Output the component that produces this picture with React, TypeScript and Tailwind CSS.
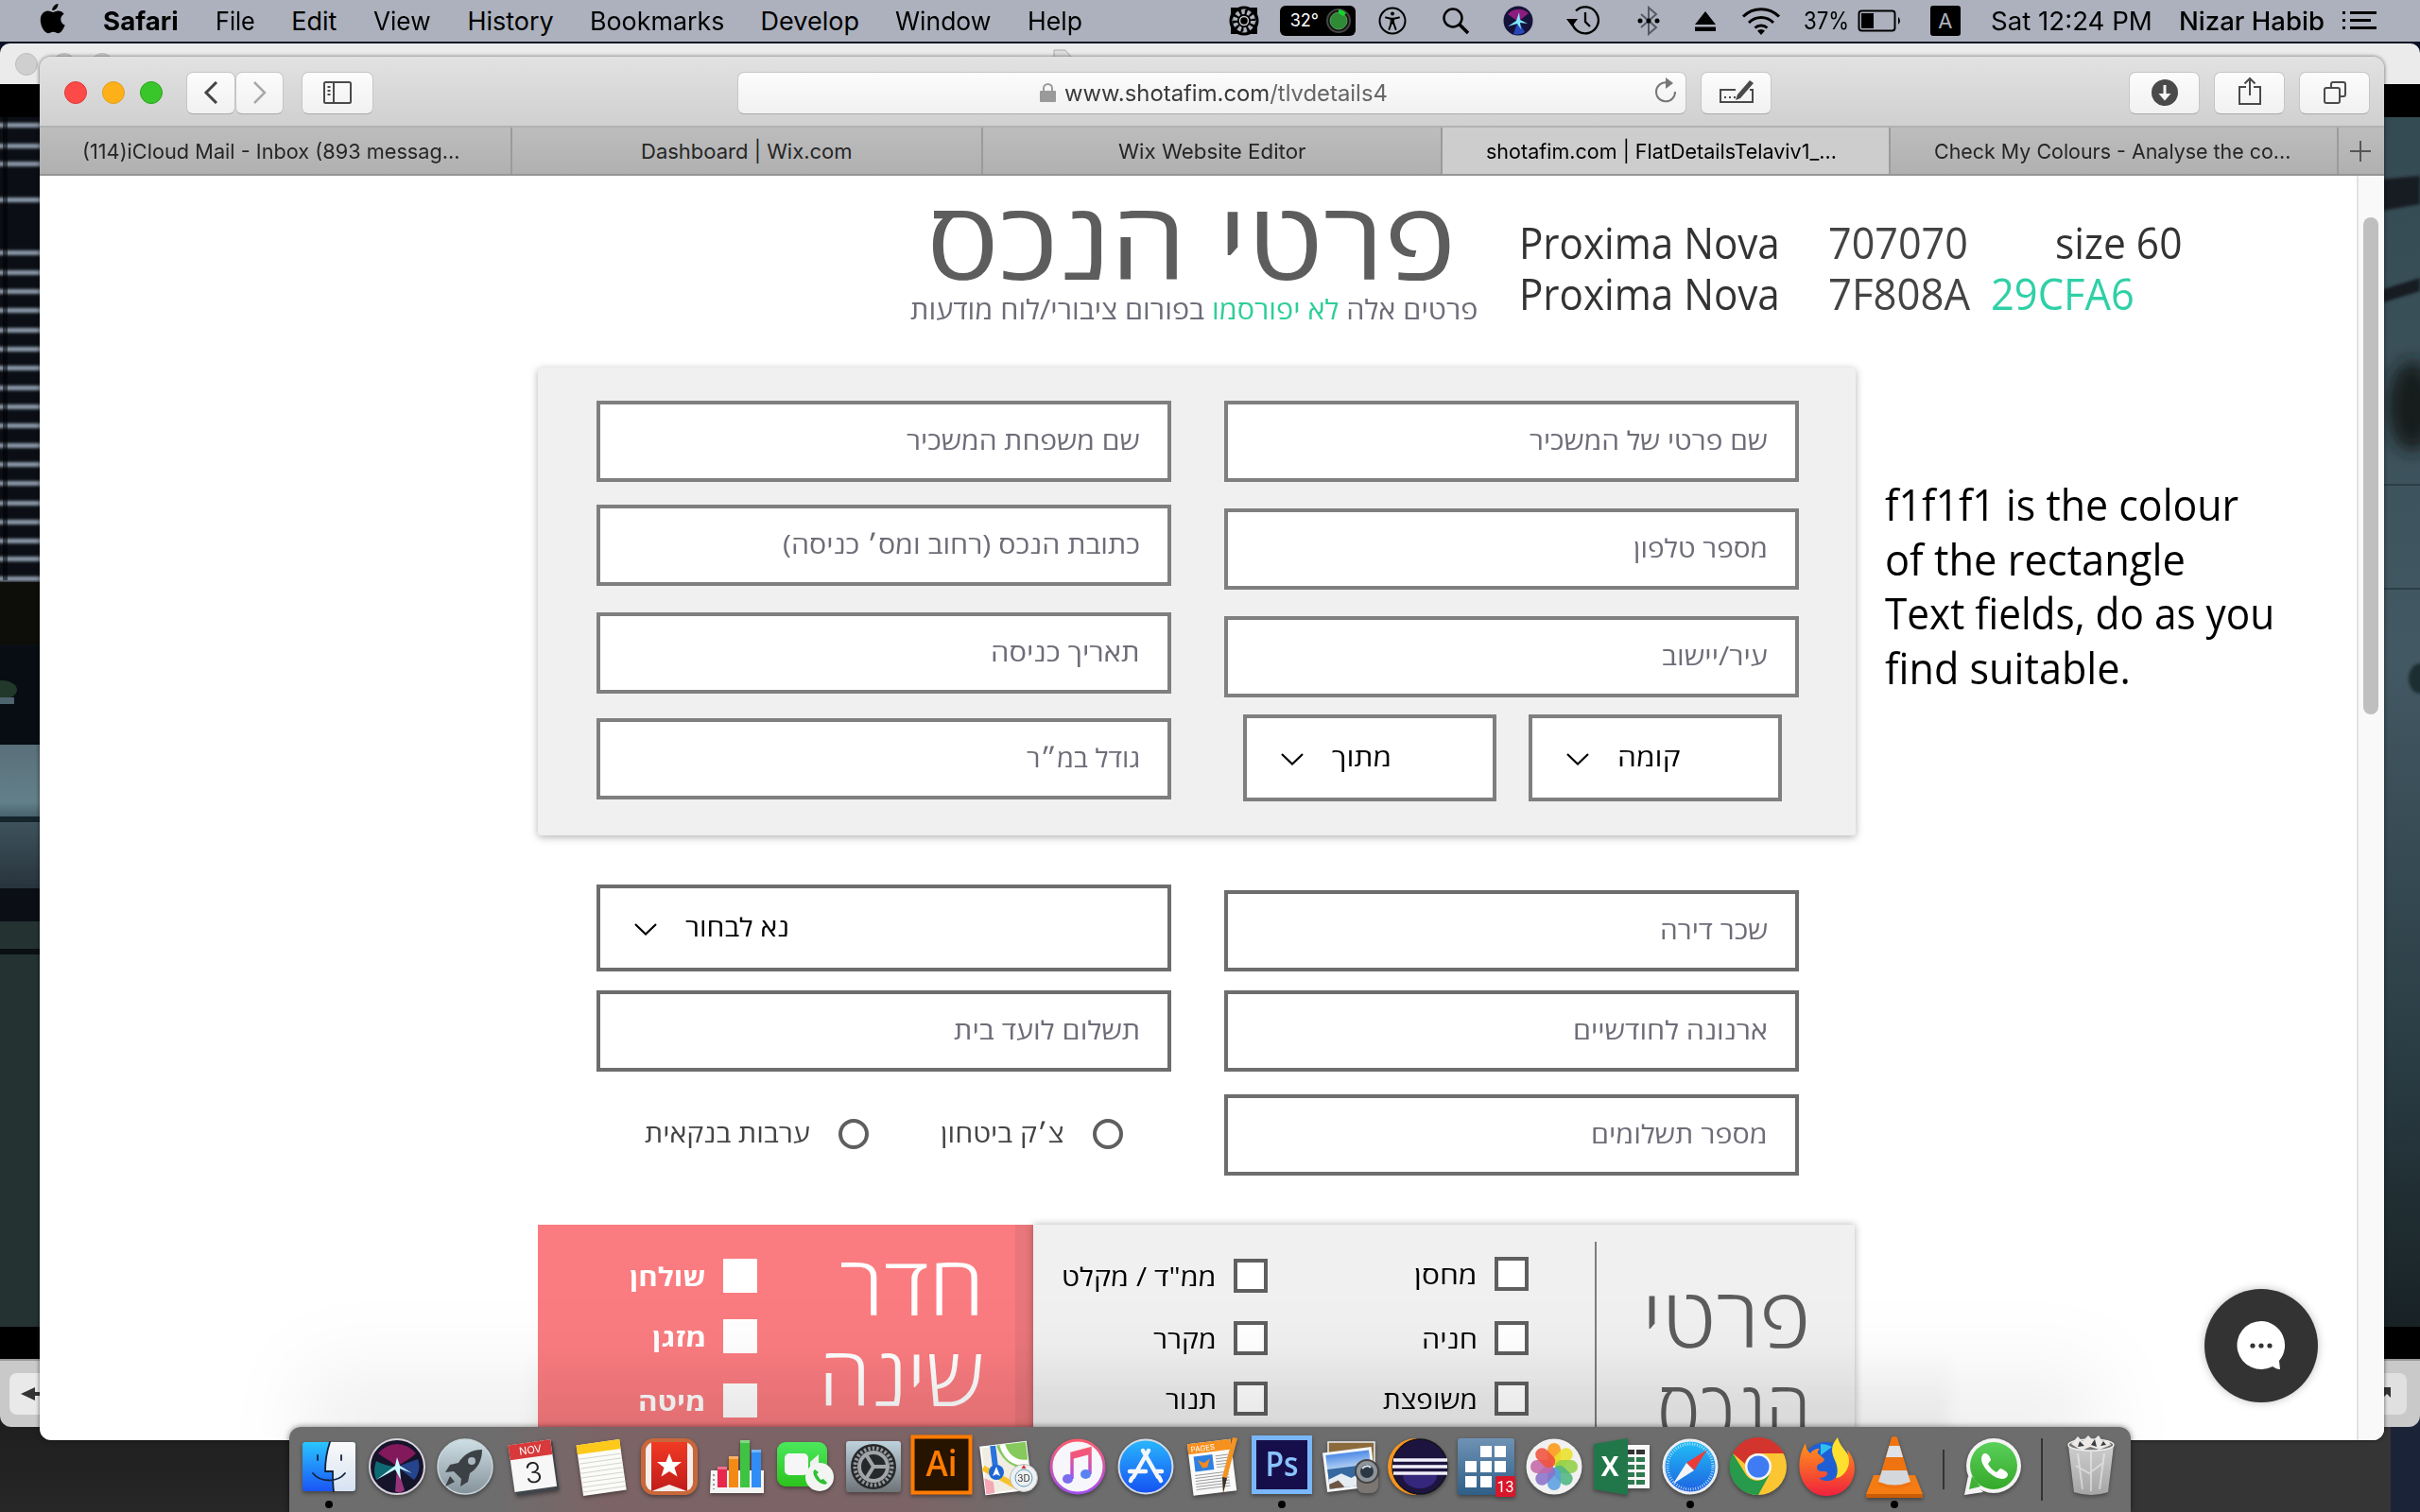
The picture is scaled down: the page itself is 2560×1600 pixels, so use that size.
import React, { useLayoutEffect, useRef, useState } from "react";

/* Text stretched or squeezed horizontally to occupy an exact width. */
function Fit({ w, children, className = "", rtl = false }: { w: number; children: React.ReactNode; className?: string; rtl?: boolean }) {
  const ref = useRef<HTMLSpanElement>(null);
  const [scale, setScale] = useState(1);
  useLayoutEffect(() => {
    if (ref.current && ref.current.offsetWidth) setScale(w / ref.current.offsetWidth);
  }, [w]);
  return (
    <span dir="ltr" className={`flex shrink-0 justify-start ${className}`} style={{ width: w }}>
      <span ref={ref} dir={rtl ? "rtl" : "ltr"} className="block shrink-0 origin-left whitespace-nowrap" style={{ transform: `scaleX(${scale})` }}>
        {children}
      </span>
    </span>
  );
}

/* ---------- Menu bar ---------- */
const menus: [string, number][] = [
  ["File", 42], ["Edit", 48], ["View", 61], ["History", 91], ["Bookmarks", 142], ["Develop", 104], ["Window", 101], ["Help", 58],
];

function MenuBar() {
  return (
    <div className="relative z-10 flex h-11 items-center bg-[#adb1bd] font-['Inter'] text-[27px] leading-none text-black">
      <svg className="ml-[42px] h-8 w-7 -translate-y-0.5" viewBox="0 0 28 32">
        <path d="M19.5 0c.2 3.600-2.800 7.200-6.200 7.100C13 3.600 16 .4 19.500 0zM13.900 8.900c1.300 0 3.200-1.500 5.800-1.500 2.300 0 4.600 1.200 6 3.300-5 2.900-4.300 9.900 1 11.900-1 3-3.900 8.500-6.900 8.600-2.100 0-2.900-1.400-5.400-1.400s-3.400 1.400-5.400 1.400C5 31.200.8 23.600.8 17.300c0-6.200 3.900-9.700 7.700-9.700 2.300 0 4.200 1.300 5.400 1.300z" />
      </svg>
      <Fit w={80} className="ml-[39px] font-bold">Safari</Fit>
      {menus.map(([m, w]) => <Fit key={m} w={w} className="ml-[38.600px]">{m}</Fit>)}
      <svg className="ml-[155px] h-8 w-8" viewBox="0 0 32 32" fill="none" stroke="#000">
        <path d="M2 2h6l8 3 8-3h6v6l-2 8 2 8v6h-6l-8-3-8 3H2v-6l2-8-2-8z" fill="#000" stroke="none" />
        <circle cx="16" cy="16" r="14" strokeWidth="3" />
        <circle cx="16" cy="16" r="9.500" stroke="#adb1bd" strokeWidth="5" strokeDasharray="3.500 2.470" />
        <circle cx="16" cy="16" r="4.500" fill="#000" stroke="#ccc" strokeWidth="1.500" />
      </svg>
      <div className="ml-[22px] flex h-8 w-20 items-center justify-between rounded-md bg-black pl-[11px] pr-1 text-[18px] text-white">
        <span>32°</span>
        <svg className="h-7 w-7" viewBox="0 0 28 28"><circle cx="14" cy="14" r="12" fill="#111" stroke="#444" strokeWidth="2" /><circle cx="14" cy="14" r="9" fill="#2f8a35" stroke="#5b9c5f" /><path d="M14 2a12 12 0 0 1 8 4l-3 3-5-3z" fill="#19d52b" /></svg>
      </div>
      <svg className="ml-6 h-[30px] w-[30px]" viewBox="0 0 30 30" fill="none" stroke="#000" strokeWidth="2" strokeLinecap="round"><circle cx="15" cy="15" r="13.500" /><circle cx="15" cy="7.500" r="2" fill="#000" stroke="none" /><path d="M8 11.500l5.500 1.200h3L22 11.500" /><path d="M13.500 12.500h3v5.500h-3z" fill="#000" strokeWidth="1" /><path d="M13.700 17.500L11.500 24M16.300 17.500l2.200 6.500" /></svg>
      <svg className="ml-[37px] h-[30px] w-[30px]" viewBox="0 0 30 30" fill="none" stroke="#000" strokeWidth="2.500"><circle cx="12" cy="12" r="9.500" /><path d="M19 19l9 9" strokeWidth="3.500" /></svg>
      <svg className="ml-9 h-8 w-8 -translate-x-px" viewBox="0 0 32 32"><circle cx="16" cy="16" r="15.500" fill="#15133a" /><path d="M5 9a15 15 0 0 1 22-1L16 17z" fill="#8c1d7e" /><path d="M16 16l7 12a15 15 0 0 1-12 2z" fill="#2c55d8" opacity=".8" /><path d="M5 22l9-6 3-9 1 8 8 4-8-1 1 7-4-6z" fill="#7fe9ff" /></svg>
      <svg className="ml-[32px] h-8 w-[38px]" viewBox="0 0 38 32" fill="none" stroke="#000" strokeWidth="2.300"><path d="M8 17a14 14 0 1 0 4-11.500M22 7v10l5 5" /><path d="M2 14h12l-6 8z" fill="#000" stroke="none" /></svg>
      <svg className="ml-[39px] h-8 w-6" viewBox="0 0 24 32" fill="none" stroke="#555a66" strokeWidth="2"><path d="M4 9l16 14-8 7V2l8 7L4 23" /><g fill="#000" stroke="none"><circle cx="3" cy="16" r="2.500" /><circle cx="12" cy="16" r="2.500" /><circle cx="21" cy="16" r="2.500" /></g></svg>
      <svg className="ml-[36px] h-6 w-6" viewBox="0 0 24 24"><path d="M12 2l11 14H1zM1 18.500h22V23H1z" /></svg>
      <svg className="ml-[26px] h-[30px] w-[42px]" viewBox="0 0 42 30" fill="none" stroke="#000" strokeWidth="3"><path d="M2 10.500a27 27 0 0 1 38 0M8 17a18 18 0 0 1 26 0M14.500 22.500a9.500 9.500 0 0 1 13 0" /><path d="M21 30l-4-4.500a6 6 0 0 1 8 0z" fill="#000" stroke="none" /></svg>
      <Fit w={48} className="ml-[24px] text-[25px]">37%</Fit>
      <svg className="ml-[9px] h-6 w-12" viewBox="0 0 48 24"><rect x="1.500" y="1.500" width="38" height="21" rx="3" fill="none" stroke="#000" strokeWidth="2" /><rect x="4" y="4" width="13" height="16" /><path d="M43 8a5 5 0 0 1 0 8z" /></svg>
      <span className="ml-[29px] flex h-8 w-8 items-center justify-center rounded-[3px] bg-black text-[22px] text-[#adb1bd]">A</span>
      <Fit w={171} className="ml-8">Sat 12:24 PM</Fit>
      <Fit w={154} className="ml-7 font-medium">Nizar Habib</Fit>
      <svg className="ml-[19px] h-5 w-9" viewBox="0 0 36 20"><path d="M0 0h3v3H0zM8 0h28v3H8zM0 8h3v3H0zM8 8h22v3H8zM0 16h3v3H0zM8 16h28v3H8z" /></svg>
    </div>
  );
}

/* ---------- Background photo window ---------- */
const blinds = [131, 153, 172, 210, 266, 287, 307, 327, 348, 368, 388, 409, 429, 449, 470, 490, 510, 531, 551, 571, 590, 611];

function Backdrop() {
  return (
    <>
      <svg className="absolute inset-0 h-[1600px] w-[2560px]" viewBox="0 0 2560 1600">
        <defs>
          <filter id="soft" x="-50%" y="-50%" width="200%" height="200%"><feGaussianBlur stdDeviation="1.600" /></filter>
          <filter id="softer" x="-50%" y="-50%" width="200%" height="200%"><feGaussianBlur stdDeviation="9" /></filter>
          <linearGradient id="counter" x1="0" y1="0" x2="0" y2="1"><stop offset="0" stopColor="#5a6f79" /><stop offset=".4" stopColor="#62808a" /><stop offset=".55" stopColor="#3d525b" /><stop offset="1" stopColor="#28333d" /></linearGradient>
          <linearGradient id="wall" x1="0" y1="0" x2="0" y2="1"><stop offset="0" stopColor="#344a52" /><stop offset=".45" stopColor="#425862" /><stop offset=".75" stopColor="#2c3f47" /><stop offset="1" stopColor="#182225" /></linearGradient>
          <linearGradient id="desk" x1="0" y1="0" x2="0" y2="1"><stop offset="0" stopColor="#1c1c1c" /><stop offset="1" stopColor="#272727" /></linearGradient>
        </defs>
        <rect width="2560" height="1600" fill="#0a1124" />
        <rect y="1480" width="1280" height="120" fill="url(#desk)" />
        <rect x="1280" y="1480" width="1249" height="120" fill="#353535" />
        <rect x="2529" y="1480" width="31" height="120" fill="#1b2338" />
        <rect y="80" width="2560" height="1400" fill="#000" />
        <rect y="124" width="50" height="1280" fill="#0b0f15" />
        {blinds.map((y) => <rect key={y} x="-6" y={y - 1} width="56" height="5" fill="#8b99a9" filter="url(#soft)" />)}
        <rect x="3" y="124" width="5" height="490" fill="#000" opacity=".55" />
        <rect y="616" width="50" height="66" fill="#0d0d09" />
        <rect y="684" width="50" height="104" fill="#070d12" />
        <ellipse cx="2" cy="730" rx="16" ry="10" fill="#21382a" />
        <rect y="738" width="15" height="7" fill="#4d646e" />
        <rect y="788" width="50" height="152" fill="url(#counter)" />
        <rect y="864" width="50" height="6" fill="#15252c" />
        <rect y="975" width="50" height="429" fill="#243231" />
        <rect y="1004" width="50" height="6" fill="#0a0f0f" />
        <rect x="2510" y="124" width="50" height="1280" fill="url(#wall)" />
        <path d="M2515 190l45-4v30l-45 8zM2515 308l45-14v14l-45 14z" fill="#131d20" filter="url(#soft)" />
        <ellipse cx="2552" cy="430" rx="26" ry="48" fill="#131c1c" filter="url(#softer)" />
        <ellipse cx="2560" cy="718" rx="12" ry="16" fill="#1c2d33" filter="url(#soft)" />
        <path d="M2515 512h45v2h-45zM2515 622h45v2h-45z" fill="#2c3f48" />
      </svg>
      <div className="absolute left-0 top-[46px] h-[43px] w-full overflow-hidden rounded-t-[10px] bg-[#ebebeb]">
        <div className="flex h-11 items-center gap-4 pl-4">
          <span className="size-6 rounded-full border border-[#bdbdbd] bg-[#cfcfcf]" />
          <span className="size-6 rounded-full border border-[#bdbdbd] bg-[#cfcfcf]" />
          <span className="size-6 rounded-full border border-[#bdbdbd] bg-[#cfcfcf]" />
          <svg className="ml-[978px] h-8 w-5" viewBox="0 0 20 32"><path d="M1 1h12l6 7v23H1z" fill="#ddd" stroke="#aaa" /></svg>
        </div>
      </div>
      <div className="absolute left-0 top-[1438px] flex h-[72px] w-full items-center justify-between rounded-b-[12px] border-t-2 border-[#999] bg-[#c9c9c9] px-[10px]">
        <span className="flex h-11 w-[60px] items-center rounded-lg bg-[#e9e9e9] pl-3"><svg className="h-4 w-9" viewBox="0 0 36 16"><path d="M0 8l15-7v5h20v4H15v5z" fill="#333" /></svg></span>
        <span className="mr-1 flex h-11 w-[60px] items-center justify-end rounded-lg bg-[#e0e0e0] pr-4"><svg className="size-4" viewBox="0 0 16 16"><path d="M4 1h11v11l-4-4-8 8-3-3 8-8z" fill="#333" /></svg></span>
      </div>
    </>
  );
}

/* ---------- Safari chrome ---------- */
const btn = "flex h-[45px] items-center justify-center rounded-[7px] border border-[#c6c6c6] border-b-[#a9a9a9] bg-gradient-to-b from-[#fcfcfc] to-[#f1f1f1]";

function Toolbar() {
  return (
    <div className="flex h-[75px] items-center border-b-2 border-[#b2b2b2] bg-gradient-to-b from-[#e2e2e2] to-[#d0d0d0] pt-[3px]">
      <span className="ml-[26px] size-6 rounded-full border border-[#e0383a] bg-[#fc4a48]" />
      <span className="ml-4 size-6 rounded-full border border-[#dfa023] bg-[#fdb017]" />
      <span className="ml-4 size-6 rounded-full border border-[#2aa31c] bg-[#39c62a]" />
      <span className={`${btn} ml-[25px] w-[52px]`}><svg className="h-6 w-4" viewBox="0 0 16 24" fill="none" stroke="#444" strokeWidth="3"><path d="M14 1L3 12l11 11" /></svg></span>
      <span className={`${btn} w-[51px]`}><svg className="h-6 w-4" viewBox="0 0 16 24" fill="none" stroke="#a9a9a9" strokeWidth="2.500"><path d="M2 1l11 11L2 23" /></svg></span>
      <span className={`${btn} ml-[19px] w-[76px]`}><svg className="h-6 w-[30px]" viewBox="0 0 30 24" fill="none" stroke="#4a4a4a" strokeWidth="2"><rect x="1" y="1" width="28" height="22" rx="1.500" /><path d="M11 1v22M4.500 6h3M4.500 10h3M4.500 14h3" /></svg></span>
      <div className={`${btn} ml-[385px] w-[1004px] font-['Inter'] text-[24px] leading-none`}>
        <span className="flex w-[966px] items-center justify-center">
          <svg className="ml-[20px] mr-2 h-5 w-[18px] shrink-0" viewBox="0 0 18 20"><rect y="8" width="17" height="12" rx="1" fill="#9a9a9a" /><path d="M4 9V5.500a4.500 4.500 0 0 1 9 0V9" fill="none" stroke="#9a9a9a" strokeWidth="2" /></svg>
          <Fit w={342} className="translate-y-px text-[#3a3a3a]">www.shotafim.com<span className="text-[#666]">/tlvdetails4</span></Fit>
        </span>
        <svg className="-ml-[7px] h-7 w-6 -translate-y-0.5" viewBox="0 0 24 28" fill="none" stroke="#777" strokeWidth="2"><path d="M14 5.500A10 10 0 1 0 22 15" /><path d="M12 0l8 6-8 6z" fill="#777" stroke="none" /></svg>
      </div>
      <span className={`${btn} ml-[15px] w-[75px]`}><svg className="h-7 w-10" viewBox="0 0 40 28" fill="none" stroke="#4a4a4a" strokeWidth="2"><path d="M19 11H3v13h34V11h-3" /><path d="M7 19h2M12 19h2M17 19h2" /><path d="M34 1l4 3-14 16-5 2 2-6z" fill="#4a4a4a" stroke="none" /></svg></span>
      <span className={`${btn} ml-[378px] w-[75px]`}><svg className="size-7" viewBox="0 0 28 28"><circle cx="14" cy="14" r="14" fill="#4a4a4a" /><path d="M12.500 6h3v9h5L14 22.500 7.500 15h5z" fill="#f5f5f5" /></svg></span>
      <span className={`${btn} ml-[15px] w-[75px]`}><svg className="h-8 w-6 -translate-y-0.5" viewBox="0 0 24 32" fill="none" stroke="#4a4a4a" strokeWidth="2"><path d="M8 12H1v18h22V12h-7M12 21V3M6.500 8.500L12 3l5.500 5.500" /></svg></span>
      <span className={`${btn} ml-[15px] w-[75px]`}><svg className="size-6" viewBox="0 0 24 24" fill="none" stroke="#4a4a4a" strokeWidth="2"><rect x="1" y="7" width="16" height="16" rx="2" /><path d="M8 7V3a2 2 0 0 1 2-2h11a2 2 0 0 1 2 2v11a2 2 0 0 1-2 2h-4" /></svg></span>
    </div>
  );
}

function Tabs() {
  const tab = "flex h-full items-center justify-center border-r-2 border-[#9b9b9b]";
  return (
    <div className="flex h-[51px] items-center border-b-2 border-[#959595] bg-gradient-to-b from-[#bdbdbd] to-[#b0b0b0] font-['Inter'] text-[22px] leading-none text-[#262626]">
      <div className={`${tab} w-[500px] pr-2`}><Fit w={400}>(114)iCloud Mail - Inbox (893 messag...</Fit></div>
      <div className={`${tab} w-[498px]`}><Fit w={224}>Dashboard | Wix.com</Fit></div>
      <div className={`${tab} w-[486px]`}><Fit w={198}>Wix Website Editor</Fit></div>
      <div className={`${tab} w-[474px] bg-[#cdcdcd] pr-2.5 text-black`}><Fit w={371}>shotafim.com | FlatDetailsTelaviv1_...</Fit></div>
      <div className={`${tab} w-[474px] pr-[3px]`}><Fit w={377}>Check My Colours - Analyse the co...</Fit></div>
      <svg className="ml-[11px] size-6" viewBox="0 0 24 24" stroke="#555" strokeWidth="2"><path d="M12 1v22M1 12h22" /></svg>
    </div>
  );
}

/* ---------- Page ---------- */
const heb = "font-['Open_Sans','Liberation_Sans',sans-serif]";

function Field({ label, w, dark = false, className = "" }: { label: string; w: number; dark?: boolean; className?: string }) {
  return (
    <div className={`flex h-[86px] w-[608px] items-center justify-end border-4 bg-white pb-[3px] pr-[29px] text-[27px] font-medium leading-none text-[#6d6d78] ${dark ? "border-[#6d6d6d]" : "border-[#7f7f7f]"} ${className}`}>
      <Fit w={w} rtl>{label}</Fit>
    </div>
  );
}

function Select({ label, w, className = "" }: { label: string; w: number; className?: string }) {
  return (
    <div className={`flex h-[92px] items-center border-4 bg-white pb-[3px] pl-[36px] text-[27px] font-medium leading-none text-black ${className}`}>
      <svg className="mr-[30px] h-[13px] w-6 translate-y-[3px]" viewBox="0 0 24 13" fill="none" stroke="#000" strokeWidth="2.200"><path d="M1 1l11 10.500L23 1" /></svg>
      <Fit w={w} rtl>{label}</Fit>
    </div>
  );
}

function Check({ label, w, className = "", box = "border-4 border-[#5f5f5f] bg-white" }: { label: string; w: number; className?: string; box?: string }) {
  return (
    <div className={`flex items-center justify-end gap-[18px] ${className}`}>
      <Fit w={w} rtl>{label}</Fit>
      <span className={`size-9 shrink-0 ${box}`} />
    </div>
  );
}

function Radio({ label, w, className = "" }: { label: string; w: number; className?: string }) {
  return (
    <div className={`flex items-center gap-[30px] ${className}`}>
      <Fit w={w} rtl className="-translate-y-0.5">{label}</Fit>
      <span className="size-8 rounded-full border-4 border-[#5f5f5f]" />
    </div>
  );
}

function Page() {
  return (
    <div className={`relative flex h-[1338px] bg-white ${heb}`}>
      <main className="h-full w-[2451px] overflow-hidden">
        <header className="flex h-[203px]">
          <div className="ml-[921px] w-[598px]">
            <h1 className="ml-[17px] mt-[11px] h-[110px] text-[114px] font-medium leading-[110px] text-[#5d5d5d]"><Fit w={560} rtl>פרטי הנכס</Fit></h1>
            <p className="mt-[2px] text-[28.500px] font-medium leading-[36px] text-[#6d6d78]">
              <Fit w={600} rtl>פרטים אלה <span className="text-[#2fce98]">לא יפורסמו</span> בפורום ציבורי/לוח מודעות</Fit>
            </p>
          </div>
          <div className="ml-[46px] mt-[43px] text-[46px] leading-[54px] text-[#333]">
            <div className="flex"><Fit w={276}>Proxima Nova</Fit><Fit w={148} className="ml-[51px] text-[#444]">707070</Fit><Fit w={134} className="ml-[92px]">size 60</Fit></div>
            <div className="flex"><Fit w={276}>Proxima Nova</Fit><Fit w={150} className="ml-[51px] text-[#444]">7F808A</Fit><Fit w={152} className="ml-[22px] text-[#2fd0a6]">29CFA6</Fit></div>
          </div>
        </header>

        <div className="flex">
          <section className="ml-[527px] flex h-[495px] w-[1394px] rounded-[3px] bg-[#f0f0f0] pl-[62px] pt-[35px] shadow-[0_2px_8px_rgba(0,0,0,0.3)]">
            <div>
              <Field label="שם משפחת המשכיר" w={247} />
              <Field label="כתובת הנכס (רחוב ומס׳ כניסה)" w={378} className="mt-6" />
              <Field label="תאריך כניסה" w={158} className="mt-7" />
              <Field label="גודל במ״ר" w={120} className="mt-[26px]" />
            </div>
            <div className="ml-14">
              <Field label="שם פרטי של המשכיר" w={252} />
              <Field label="מספר טלפון" w={142} className="mt-7" />
              <Field label="עיר/יישוב" w={112} className="mt-7" />
              <div className="ml-5 mt-[18px] flex gap-[34px]">
                <Select label="מתוך" w={63} className="w-[268px] border-[#7f7f7f]" />
                <Select label="קומה" w={67} className="w-[268px] border-[#7f7f7f]" />
              </div>
            </div>
          </section>
          <aside className="ml-[31px] mt-[116px] text-[46px] leading-[57.700px] text-black">
            <Fit w={374}>f1f1f1 is the colour</Fit>
            <Fit w={318}>of the rectangle</Fit>
            <Fit w={412}>Text fields, do as you</Fit>
            <Fit w={260}>find suitable.</Fit>
          </aside>
        </div>

        <section className="ml-[589px] mt-[52px] flex h-[308px] gap-14">
          <div>
            <Select label="נא לבחור" w={110} className="w-[608px] border-[#6d6d6d]" />
            <Field label="תשלום לועד בית" w={197} dark className="mt-5" />
            <div className="ml-[51px] mt-[50px] flex items-center text-[27px] font-medium leading-none text-[#444]">
              <Radio label="ערבות בנקאית" w={175} />
              <Radio label="צ׳ק ביטחון" w={131} className="ml-[76px]" />
            </div>
          </div>
          <div className="pt-1.5">
            <Field label="שכר דירה" w={114} dark />
            <Field label="ארנונה לחודשיים" w={206} dark className="mt-5" />
            <Field label="מספר תשלומים" w={187} dark className="mt-6" />
          </div>
        </section>

        <section className="ml-[527px] mt-[52px] flex h-[240px] w-[1393px] text-[27px] font-medium leading-none">
          <div className="flex w-[524px] border-r-[19px] border-[#e9767a] bg-[#fa7c80] text-white">
            <div className="w-[232px] pt-9 font-bold">
              <Check label="שולחן" w={81} box="bg-white" />
              <Check label="מזגן" w={57} box="bg-white" className="mt-7" />
              <Check label="מיטה" w={72} box="bg-white" className="mt-8" />
            </div>
            <div className="flex w-[240px] flex-col items-end pt-[14px] text-[87px] font-light leading-[96px]">
              <Fit w={153} rtl>חדר</Fit>
              <Fit w={175} rtl>שינה</Fit>
            </div>
          </div>
          <div className="flex h-full w-[869px] bg-[#f0f0f0] text-black shadow-[0_0_8px_rgba(0,0,0,0.3)]">
            <div className="w-[248px] pt-9">
              <Check label={'ממ"ד / מקלט'} w={164} />
              <Check label="מקרר" w={67} className="mt-[30px]" />
              <Check label="תנור" w={54} className="mt-7" />
            </div>
            <div className="w-[276px] pt-[34px]">
              <Check label="מחסן" w={67} />
              <Check label="חניה" w={59} className="mt-8" />
              <Check label="משופצת" w={100} className="mt-7" />
            </div>
            <div className="ml-[70px] mt-[18px] w-0.5 bg-[#7d7d7d]" />
            <div className="flex flex-1 flex-col items-end pr-[47px] pt-[47px] text-[87px] font-light leading-[98px] text-[#5d5d5d]">
              <Fit w={178} rtl>פרטי</Fit>
              <Fit w={162} rtl>הנכס</Fit>
            </div>
          </div>
        </section>
      </main>
      <div className="h-full w-[29px] border-l-2 border-[#e2e2e2] bg-[#f9f9f9] pl-[5px] pt-11">
        <div className="h-[526px] w-4 rounded-full bg-[#bfbfbf]" />
      </div>
      <div className="absolute -bottom-4 left-[280px] h-[120px] w-[1900px] bg-gradient-to-b from-transparent to-black/10 blur-2xl" />
      <div className="absolute left-[520px] bottom-0 h-[100px] w-[1500px] bg-gradient-to-b from-transparent to-black/5 blur-sm" />
      <div className="absolute left-[2290px] top-[1178px] flex size-[120px] items-center justify-center rounded-full bg-[#333] shadow-[0_0_10px_rgba(0,0,0,0.25)]">
        <svg className="size-[54px]" viewBox="0 0 54 54"><path d="M27 1a25.500 25.500 0 1 0 12 48c3 2 5 3 8 3l-1-9A25.500 25.500 0 0 0 27 1z" fill="#fff" /><g fill="#333"><circle cx="18" cy="27" r="2.600" /><circle cx="27" cy="27" r="2.600" /><circle cx="36" cy="27" r="2.600" /></g></svg>
      </div>
    </div>
  );
}

/* ---------- Dock ---------- */
function DockDefs() {
  const g = (id: string, a: string, b: string) => (
    <linearGradient id={id} x1="0" y1="0" x2="0" y2="1"><stop offset="0" stopColor={a} /><stop offset="1" stopColor={b} /></linearGradient>
  );
  return (
    <svg className="absolute size-0"><defs>
      {g("gBlue", "#2ac5ff", "#1a55f5")}{g("gWhite", "#fafafa", "#d6e2f2")}{g("gRocket", "#cfdfe6", "#85929a")}{g("gGreen", "#4be85c", "#2bc31d")}
      {g("gSys", "#bfd3dd", "#6e7478")}{g("gApp", "#29b7fd", "#1550f2")}{g("gMusic", "#fb5b6e", "#a34ff0")}{g("gWa", "#5bd05a", "#34a829")}
      {g("gTile", "#6e92b4", "#2f5f87")}{g("gSaf", "#22c1f7", "#1d60e0")}{g("gFox", "#ff9a1a", "#f0213e")}{g("gSky", "#4d8be8", "#cfe2f4")}{g("gRed", "#f03a24", "#c11c1a")}{g("gTrash", "#e6e6e6", "#b5b5b5")}
    </defs></svg>
  );
}

const petals: [string, number][] = [["#fc9a14", 0], ["#e8e02a", 45], ["#93cf47", 90], ["#4fb580", 135], ["#5a9fe0", 180], ["#8a72c9", 225], ["#c469a8", 270], ["#f0523c", 315]];

const icons: [string, React.ReactNode][] = [
  ["Finder", <>
    <rect x="8" y="10" width="56" height="52" rx="3" fill="url(#gBlue)" /><path d="M37 10h24a3 3 0 0 1 3 3v46a3 3 0 0 1-3 3H41c-1-7-1-14-1-21h-8c0-12 2-22 5-31z" fill="url(#gWhite)" />
    <path d="M24 24v5M49 24v5M19 43c8 10 26 10 34 0M37 10c-3 9-5 19-5 31h8c0 7 0 14 1 21" fill="none" stroke="#10233f" strokeWidth="1.800" strokeLinecap="round" /></>],
  ["Siri", <>
    <circle cx="36" cy="36" r="29" fill="#16142b" stroke="#d9d3dc" strokeWidth="2" /><path d="M16 22a25 25 0 0 1 40 0c-6 6-12 8-20 14-6-6-12-8-20-14z" fill="#9c1a68" opacity=".8" />
    <path d="M36 36L14 50c-3-8-2-14 0-20 8 4 16 6 22 6z" fill="#0d8f94" opacity=".7" /><path d="M36 36l22-8c3 8 1 16-4 22z" fill="#2950a4" opacity=".8" />
    <path d="M36 36l8 25c-4 3-8 3-10 1z" fill="#d0439b" opacity=".7" />
    <path d="M14 50l20-15 2-9 3 9 13 8-13-5 1 12-6-11z" fill="#c9fbff" /></>],
  ["Launchpad", <>
    <circle cx="36" cy="36" r="29" fill="url(#gRocket)" stroke="#c8d6dc" strokeWidth="1.500" /><path d="M54 18c-12 0-20 6-25 14l-9 2-5 8 9-1 8 8-1 8 8-5 2-9c8-5 13-13 13-25zM20 46l-5 11 10-5z" fill="#3c4145" /><circle cx="43" cy="30" r="4" fill="#a9b8bf" /></>],
  ["Calendar", <g transform="rotate(-8 36 36)">
    <path d="M15 12h45v52H15z" fill="#3f454a" /><rect x="13" y="10" width="45" height="50" fill="#f7f7f7" /><rect x="13" y="10" width="45" height="16" fill="#d8393a" />
    <text x="35.500" y="22" textAnchor="middle" fontSize="11" fill="#fff" fontFamily="Inter">NOV</text><text x="35.500" y="53" textAnchor="middle" fontSize="30" fontWeight="300" fill="#222" fontFamily="Inter">3</text></g>],
  ["Notes", <g transform="rotate(-8 36 36)">
    <rect x="13" y="10" width="46" height="54" fill="#fbfbf8" /><rect x="13" y="10" width="46" height="10" fill="#fdc91a" />
    {[25, 30, 35, 40, 45, 50, 55, 60].map((y) => <path key={y} d={`M13 ${y}h46`} stroke="#d3d3cf" />)}</g>],
  ["Wunderlist", <>
    <rect x="6" y="6" width="60" height="60" rx="14" fill="#c9673b" /><rect x="11" y="10" width="50" height="52" rx="9" fill="#f5efec" /><path d="M17 10h38v52l-19-7-19 7z" fill="url(#gRed)" />
    <path d="M36 22l3.500 9h9.500l-7.500 6 3 9.500-8.500-5.500-8.500 5.500 3-9.500-7.500-6h9.500z" fill="#fff" /></>],
  ["Numbers", <>
    <path d="M8 40h56v24H7z" fill="#f4f4f4" /><rect x="15" y="36" width="10" height="22" fill="#e8274d" /><rect x="27" y="25" width="10" height="33" fill="#f38a16" /><rect x="39" y="8" width="10" height="50" fill="#3fc343" /><rect x="51" y="18" width="10" height="40" fill="#2f8df5" />
    <path d="M15 36h10v3H15zM27 25h10v3H27zM39 8h10v3H39zM51 18h10v3H51z" fill="#fff" opacity=".35" /><path d="M11 44v16" stroke="#999" strokeWidth="2" strokeDasharray="2 3" /></>],
  ["FaceTime", <>
    <rect x="6" y="10" width="53" height="47" rx="9" fill="url(#gGreen)" /><rect x="14" y="22" width="25" height="23" rx="5" fill="#f6f6f6" /><path d="M41 31l9-8v20l-9-7z" fill="#f0f0f0" />
    <circle cx="51" cy="47" r="15" fill="#f3f5f3" /><path d="M46 39c-4 2 0 10 4 13s8 4 9 1l-4-4-3 1-4-6 2-2z" fill="#2fc032" /></>],
  ["System Preferences", <>
    <rect x="7" y="9" width="58" height="54" rx="3" fill="url(#gSys)" /><circle cx="36" cy="36" r="24" fill="#26292b" /><circle cx="36" cy="36" r="19.500" fill="none" stroke="#96999b" strokeWidth="4" strokeDasharray="2.500 2" />
    <circle cx="36" cy="36" r="15" fill="none" stroke="#a2a5a7" strokeWidth="4" /><path d="M36 36h15M36 36l-8-13M36 36l-8 13" stroke="#a2a5a7" strokeWidth="4" /></>],
  ["Illustrator", <><rect x="5.500" y="4.500" width="61" height="59" fill="#261300" stroke="#ff7c00" strokeWidth="4" /><text x="36" y="46" textAnchor="middle" fontSize="38" fontWeight="600" fill="#ff7c00" fontFamily="Open Sans" textLength="33" lengthAdjust="spacingAndGlyphs">Ai</text></>],
  ["Maps", <>
    <g transform="rotate(-7 36 36)"><rect x="8" y="12" width="48" height="50" fill="#f1ede2" stroke="#fff" strokeWidth="2" /><path d="M25 12h31v28C40 40 28 28 25 12z" fill="#86c95c" /><path d="M31 12c3 15 12 22 25 22" fill="none" stroke="#fff" strokeWidth="6" /><path d="M8 34l36 26" stroke="#f8c228" strokeWidth="6" /><path d="M21 12v30" stroke="#2a72dc" strokeWidth="6" /><path d="M8 45l9 5v12H8z" fill="#f4a9b4" /></g>
    <circle cx="22" cy="42" r="8" fill="#1c67d8" /><path d="M22 36l4 10-4-2-4 2z" fill="#fff" /><circle cx="51" cy="48" r="14.500" fill="#eff0f1" stroke="#bbb" /><circle cx="51" cy="48" r="9" fill="none" stroke="#5a9fbf" /><text x="51" y="52" textAnchor="middle" fontSize="10" fill="#333" fontFamily="Inter">3D</text><path d="M51 34l2.500 4h-5z" fill="#d33" /></>],
  ["iTunes", <><circle cx="36" cy="36" r="28" fill="#f7f6fa" stroke="url(#gMusic)" strokeWidth="3" /><path d="M30 49V22l19-5v27" fill="none" stroke="url(#gMusic)" strokeWidth="3.500" /><path d="M30 22l19-5v6l-19 5z" fill="#f2567c" /><ellipse cx="25.500" cy="49" rx="5.500" ry="5" fill="#7b6cf0" /><ellipse cx="44.500" cy="44" rx="5.500" ry="5" fill="#5b82f3" /></>],
  ["App Store", <><circle cx="36" cy="36" r="28.500" fill="url(#gApp)" stroke="#d3dbe6" strokeWidth="2" /><path d="M33 19l16 28M39 19L23 47M19 41h17M46 41h7M20 51l1.500-3M52 51l-2-4" stroke="#f4f6fa" strokeWidth="4.500" strokeLinecap="round" /></>],
  ["Pages", <>
    <g transform="rotate(-7 36 36)"><rect x="11" y="9" width="46" height="55" fill="#fafafa" /><rect x="11" y="9" width="46" height="11" fill="#f6901e" /><text x="14" y="18" fontSize="8" fill="#fff" fontFamily="Inter">PAGES</text><rect x="16" y="23" width="20" height="16" fill="#2e7fe0" /><path d="M20 27l6 4 7-4-4 9h-5z" fill="#f58a1a" />
    {[25, 28, 31, 34, 37].map((y) => <path key={y} d={`M39 ${y}h14`} stroke="#9a9a9a" />)}{[43, 46, 49, 52, 55, 58].map((y) => <path key={y} d={`M15 ${y}h36`} stroke="#9a9a9a" />)}</g>
    <path d="M56 5l5 1-11 42-4 16-1-17z" fill="#f29425" /><path d="M45 47l5 1-4 16z" fill="#333" /></>],
  ["Photoshop", <><rect x="6.500" y="5.500" width="59" height="57" fill="#160e4a" stroke="#79b7fa" strokeWidth="5" /><text x="36" y="46" textAnchor="middle" fontSize="36" fontWeight="600" fill="#8ac3ff" fontFamily="Open Sans" textLength="35" lengthAdjust="spacingAndGlyphs">Ps</text></>],
  ["Preview", <>
    <rect x="13" y="10" width="49" height="38" fill="#8b6a3c" stroke="#eee" strokeWidth="1.500" /><g transform="rotate(-7 36 36)"><rect x="9" y="18" width="52" height="42" fill="#f6f6f6" /><rect x="12" y="21" width="46" height="20" fill="url(#gSky)" /><rect x="12" y="36" width="46" height="21" fill="#3668a0" /><path d="M12 47l14-5 10 6 12-5v14H12z" fill="#e5edf3" /><path d="M12 52l10-3 6 8H12z" fill="#6d5545" /></g>
    <rect x="43" y="40" width="23" height="24" rx="8" fill="#7c7672" /><circle cx="54" cy="41" r="12" fill="#8d949a" stroke="#444" strokeWidth="2" /><circle cx="54" cy="41" r="7" fill="#2b3743" /><path d="M49 38q5-5 9-1" stroke="#dfe8ef" strokeWidth="2" fill="none" /></>],
  ["Eclipse", <><path d="M34 6a30 30 0 0 0 0 60z" fill="#f7941e" /><circle cx="38" cy="36" r="29" fill="#1d1440" stroke="#15131c" strokeWidth="1.500" /><path d="M20 45h36a18 14 0 0 1-36 0z" fill="#35277c" /><path d="M10 29h57M9 36h58M10 43h57" stroke="#f1effa" strokeWidth="3.500" /></>],
  ["Tiles", <><rect x="6" y="6" width="60" height="60" rx="3" fill="url(#gTile)" /><path d="M30 14h12v12H30zM45 14h12v12H45zM14 30h12v12H14zM30 30h12v12H30zM45 30h12v12H45zM14 46h12v12H14zM30 46h12v12H30z" fill="#fff" /><rect x="46" y="46" width="21" height="22" rx="2" fill="#d9172a" /><text x="56.500" y="63" textAnchor="middle" fontSize="16" fill="#fff" fontFamily="Roboto">13</text></>],
  ["Photos", <><circle cx="36" cy="36" r="29.500" fill="#f1f1f1" />{petals.map(([c, a]) => <rect key={a} x="29" y="11" width="14" height="24" rx="7" fill={c} opacity=".88" transform={`rotate(${a} 36 36)`} />)}</>],
  ["Excel", <><rect x="36" y="13" width="29" height="46" fill="#f8f8f8" /><path d="M40 18h9v5h-9zM51 18h9v5h-9z" fill="#333" /><path d="M40 26h9v5h-9zM51 26h9v5h-9zM40 34h9v5h-9zM51 34h9v5h-9zM40 42h9v5h-9zM51 42h9v5h-9zM40 50h9v5h-9zM51 50h9v5h-9z" fill="#2f7a51" /><path d="M6 12l36-6v60L6 60z" fill="#22774a" /><text x="23" y="46" textAnchor="middle" fontSize="28" fontWeight="700" fill="#fff" fontFamily="Open Sans">X</text></>],
  ["Safari", <><circle cx="36" cy="36" r="28" fill="url(#gSaf)" stroke="#e9edf2" strokeWidth="3" /><circle cx="36" cy="36" r="24" fill="none" stroke="#cfe8fb" strokeWidth="3" strokeDasharray=".8 1.800" /><path d="M54 18L32 32l8 8z" fill="#ec3b36" /><path d="M18 54l14-22 8 8z" fill="#f3f4f6" /></>],
  ["Chrome", <><circle cx="36" cy="36" r="30" fill="#fbc631" /><path d="M9 22a30 30 0 0 1 54 0l0 0H36c-8 0-13 5-14 11z" fill="#d3352e" /><path d="M9 22a30 30 0 0 0 27 44l12-22-6 5c-8 4-16 1-20-6z" fill="#279a4b" /><path d="M36 22h28l-1-2H36z" fill="#d3352e" /><circle cx="36" cy="36" r="14" fill="#f5f5f5" /><circle cx="36" cy="36" r="11.500" fill="#3f7cf3" /></>],
  ["Firefox", <><circle cx="36" cy="37" r="27" fill="#1f5fd6" /><path d="M30 12a26 26 0 0 1 12 3L30 24z" fill="#2fc0ef" /><path d="M14 11c-12 20-8 48 14 55 22 5 38-10 38-28 0-10-5-16-8-20 1 4 1 7 0 9-3-6-7-10-10-18-4 8-3 14 1 22 3 8-1 18-9 20-8 1-12-3-12-3s8 0 9-4-4-3-7-3c-4-1-5-4-3-7 3-2 6-2 7-6l-7-6c-1-2 1-4 2-5-5 0-8 2-10 5-3-3-5-6-5-11z" fill="url(#gFox)" /><path d="M48 5c-7 8-7 14-4 22 4 8 5 15 2 21 8 0 17-12 13-24-2-5-9-10-11-19z" fill="#ffe02e" /></>],
  ["VLC", <><path d="M14 45h44l8 20H6z" fill="#f47c12" /><path d="M6 65h60v4H6z" fill="#c85c08" /><path d="M33 5q3-2 6 0l15 50q-18 8-36 0z" fill="#ef7411" /><path d="M30.500 14h11l3.500 12H27z" fill="#dfe2e6" /><path d="M23 40h26l4 12q-17 7-34 0z" fill="#d4d8dd" /></>],
];

const running = ["Finder", "Photoshop", "Safari", "VLC"];

function Slot({ name, children }: { name: string; children: React.ReactNode }) {
  return (
    <div className="flex w-[72px] flex-col items-center">
      <svg className="mt-1.5 size-[72px] shrink-0 drop-shadow-[0_2px_2px_rgba(0,0,0,0.4)]" viewBox="0 0 72 72" role="img" aria-label={name}>{children}</svg>
      {running.includes(name) && <span className="size-2 shrink-0 rounded-full bg-black" />}
    </div>
  );
}

function Dock() {
  return (
    <div className="absolute left-[306px] top-[1510px] z-20 flex h-[90px] w-[1948px] overflow-hidden rounded-t-[12px] bg-[linear-gradient(90deg,#6d6d6d_0%,#6d6d6d_11%,#7c6466_17%,#7c6466_34%,#6d6d6d_41%,#6d6d6d_100%)] px-1.5 shadow-[0_0_6px_rgba(0,0,0,0.5)]">
      <DockDefs />
      {icons.map(([n, i]) => <Slot key={n} name={n}>{i}</Slot>)}
      <div className="flex w-8 justify-center pt-6"><span className="h-[42px] w-0.5 bg-[#333]" /></div>
      <Slot name="WhatsApp"><circle cx="37" cy="35" r="29" fill="#f4f4f4" /><path d="M6 66l4-20 16 17z" fill="#f4f4f4" /><circle cx="37" cy="35" r="25" fill="url(#gWa)" /><path d="M11 60l3-14 9 11z" fill="#3fb236" /><path d="M27 22c-6 4-2 14 6 21s17 8 19 2c1-3-6-7-8-7l-4 4c-4-2-7-5-9-9l3-4c0-2-3-8-7-7z" fill="#fff" /></Slot>
      <div className="flex w-8 justify-center pt-3"><span className="h-[66px] w-0.5 bg-[#333]" /></div>
      <Slot name="Trash"><path d="M12 13h48l-6 50q-18 6-36 0z" fill="url(#gTrash)" opacity=".85" /><ellipse cx="36" cy="13" rx="24" ry="6" fill="#777" stroke="#eee" strokeWidth="1.500" /><path d="M15 12l7-8 5 5 6-6 5 5 6-5 4 6 6-1 3 5-12 5-10-3-9 4z" fill="#ece9e6" /><path d="M24 9l5 5-7 1zM40 7l2 8-6-2zM49 9l-3 5 6-1z" fill="#3b3d45" /><path d="M22 22l5 38M36 20v42M50 22l-5 38M20 35l14 8 16-12" stroke="#fff" opacity=".45" fill="none" strokeWidth="2" /></Slot>
    </div>
  );
}

export default function App() {
  return (
    <div className="relative h-[1600px] w-[2560px] overflow-hidden bg-[#0a1124]">
      <Backdrop />
      <MenuBar />
      <div className="absolute left-[42px] top-[60px] w-[2480px] overflow-hidden rounded-[12px] shadow-[0_0_4px_rgba(0,0,0,0.6)]">
        <Toolbar />
        <Tabs />
        <Page />
      </div>
      <Dock />
    </div>
  );
}
